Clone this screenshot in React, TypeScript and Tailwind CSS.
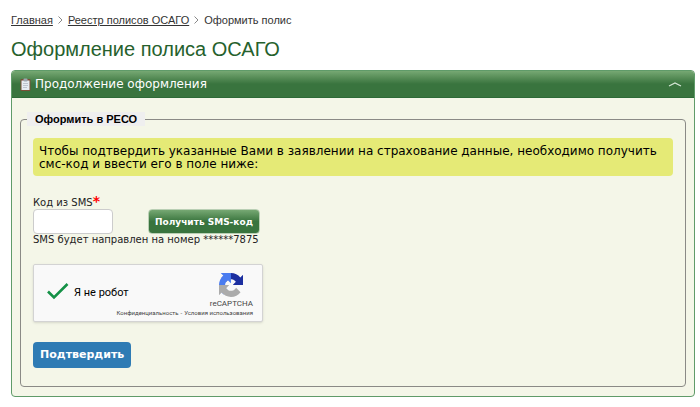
import { useState } from "react";
import type { FormEvent } from "react";

const BREADCRUMBS = [
  { label: "Главная", href: "#home" },
  { label: "Реестр полисов ОСАГО", href: "#policies" },
];

function ClipboardIcon() {
  return (
    <svg width="11" height="13" viewBox="0 0 11 13" aria-hidden="true">
      <rect x="0.500" y="1" width="10" height="12" rx="1" fill="#7a5038" />
      <rect x="1.500" y="2.500" width="8" height="9.500" fill="#e6ecf1" />
      <rect x="3.500" y="0.500" width="4" height="3" rx="1" fill="#9ea6b0" />
      <path d="M3 5.500h5M3 7.500h5M3 9.500h4" stroke="#b4bac4" strokeWidth="0.8" />
    </svg>
  );
}

function RecaptchaLogo() {
  return (
    <svg width="24" height="24" viewBox="0 0 64 64" aria-hidden="true">
      <path
        fill="#1c2fa0"
        d="M64 31.955l-.033-1.370V4.687l-7.160 7.160C50.948 4.674 42.033.093 32.050.093c-10.400 0-19.622 4.960-25.458 12.640l11.736 11.860a15.550 15.550 0 0 1 4.754-5.334c2.050-1.600 4.952-2.906 8.968-2.906.485 0 .860.057 1.135.163 4.976.393 9.288 3.140 11.828 7.124l-8.307 8.307L64 31.953"
      />
      <path
        fill="#4a7cf0"
        d="M31.862.094l-1.370.033H4.594l7.160 7.160C4.580 13.147 0 22.060 0 32.046c0 10.400 4.960 19.622 12.640 25.458L24.500 45.768a15.550 15.550 0 0 1-5.334-4.754c-1.600-2.050-2.906-4.952-2.906-8.968 0-.485.057-.860.163-1.135.393-4.976 3.140-9.288 7.124-11.828l8.307 8.307L31.860.095"
      />
      <path
        fill="#ababab"
        d="M.001 32.045l.033 1.370v25.898l7.160-7.160c5.860 7.173 14.774 11.754 24.760 11.754 10.400 0 19.622-4.960 25.458-12.640l-11.736-11.860a15.550 15.550 0 0 1-4.754 5.334c-2.050 1.600-4.952 2.906-8.968 2.906-.485 0-.860-.057-1.135-.163-4.976-.393-9.288-3.140-11.828-7.124l8.307-8.307L0 32.045"
      />
    </svg>
  );
}

function Recaptcha() {
  return (
    <div className="mt-[18px] flex h-[58px] w-[230px] rounded-xs border border-[#d3d3d3] bg-[#f9f9f9] pr-[9px] pl-3 font-['Roboto',sans-serif] shadow-sm">
      <div className="flex h-[56px] items-center gap-[5px]">
        <svg width="23" height="22" viewBox="0 0 23 22" aria-hidden="true">
          <path d="M2 9.500l6 6L21.500 2" fill="none" stroke="#149146" strokeWidth="2.600" />
        </svg>
        <span className="text-[11px] whitespace-nowrap text-black">Я не робот</span>
      </div>
      <div className="flex flex-1 flex-col items-end pt-2 text-[#444]">
        <div className="flex flex-col items-center">
          <RecaptchaLogo />
          <span className="mt-[2px] text-[8px] leading-[10px]">reCAPTCHA</span>
        </div>
        <div className="-ml-10 flex gap-[2px] text-[6px] leading-[8px] whitespace-nowrap">
          <a href="#privacy">Конфиденциальность</a>
          <span>-</span>
          <a href="#terms">Условия использования</a>
        </div>
      </div>
    </div>
  );
}

export default function App() {
  const [open, setOpen] = useState(true);
  const [code, setCode] = useState("");

  function handleSubmit(e: FormEvent) {
    e.preventDefault();
  }

  return (
    <div className="bg-white pt-3 pr-[5px] pl-[11px] font-['DejaVu_Sans',sans-serif] text-[#222]">
      {/* Breadcrumbs */}
      <nav className="flex items-center gap-[5px] font-['Liberation_Sans',sans-serif] text-[11px] leading-4 text-[#333]">
        {BREADCRUMBS.map((item) => (
          <div key={item.href} className="flex items-center gap-[5px]">
            <a href={item.href} className="underline">
              {item.label}
            </a>
            <svg width="5" height="8" viewBox="0 0 5 8" aria-hidden="true">
              <path d="M.5.5L4 4 .5 7.500" fill="none" stroke="#888" />
            </svg>
          </div>
        ))}
        <span>Оформить полис</span>
      </nav>

      <h1 className="mt-[9px] font-['Liberation_Sans',sans-serif] text-[20px] leading-6 text-[#26612d]">
        Оформление полиса ОСАГО
      </h1>

      <section className="mt-[9px] overflow-hidden rounded border border-[#5f9b69] bg-[#f4f6e8]">
        <button
          type="button"
          aria-expanded={open}
          onClick={() => setOpen(!open)}
          className="flex h-[27px] w-full items-center gap-1 border-b border-[#2d6a37] bg-linear-to-b from-[#76a873] via-[#39743e] via-50% to-[#39743e] pr-3 pl-2 text-left text-white"
        >
          <ClipboardIcon />
          <span className="flex-1 text-xs">Продолжение оформления</span>
          <svg width="14" height="5" viewBox="0 0 14 5" aria-hidden="true">
            <path d="M1 4l6-3 6 3" fill="none" stroke="#d5e6d5" strokeWidth="1.300" />
          </svg>
        </button>

        {open && (
          <form onSubmit={handleSubmit} className="px-2 pt-[14px] pb-[9px]">
            <fieldset className="rounded-sm border border-[#8a8a86] px-3 pb-[18px]">
              <legend className="-ml-[6px] bg-[#efefef] px-2 font-['Liberation_Sans',sans-serif] text-[11px] leading-[14px] font-bold text-black">
                Оформить в РЕСО
              </legend>

              <p className="mt-3 rounded-sm bg-[#e5ea76] px-[6px] pt-[7px] pb-[5px] text-xs leading-[13px] text-black">
                Чтобы подтвердить указанные Вами в заявлении на страхование данные, необходимо получить
                смс-код и ввести его в поле ниже:
              </p>

              <div className="mt-[19px] text-[10px] leading-3">
                <label htmlFor="sms-code">
                  Код из SMS<b className="text-sm leading-3 text-[#f00]">*</b>
                </label>
                <div className="flex gap-[35px]">
                  <input
                    id="sms-code"
                    type="text"
                    value={code}
                    onChange={(e) => setCode(e.target.value)}
                    className="h-[25px] w-20 rounded-sm border border-[#ccc] bg-white px-1"
                  />
                  <button
                    type="button"
                    className="h-[25px] rounded-sm border border-[#b9cfb4] bg-linear-to-b from-[#76a873] via-[#39743e] via-50% to-[#39743e] px-[6px] text-[9px] font-bold text-white"
                  >
                    Получить SMS-код
                  </button>
                </div>
                <p>SMS будет направлен на номер ******7875</p>
              </div>

              <Recaptcha />

              <button
                type="submit"
                className="mt-5 h-[26px] rounded bg-[#2e7bb4] px-[7px] text-[11px] font-bold text-white"
              >
                Подтвердить
              </button>
            </fieldset>
          </form>
        )}
      </section>
    </div>
  );
}
